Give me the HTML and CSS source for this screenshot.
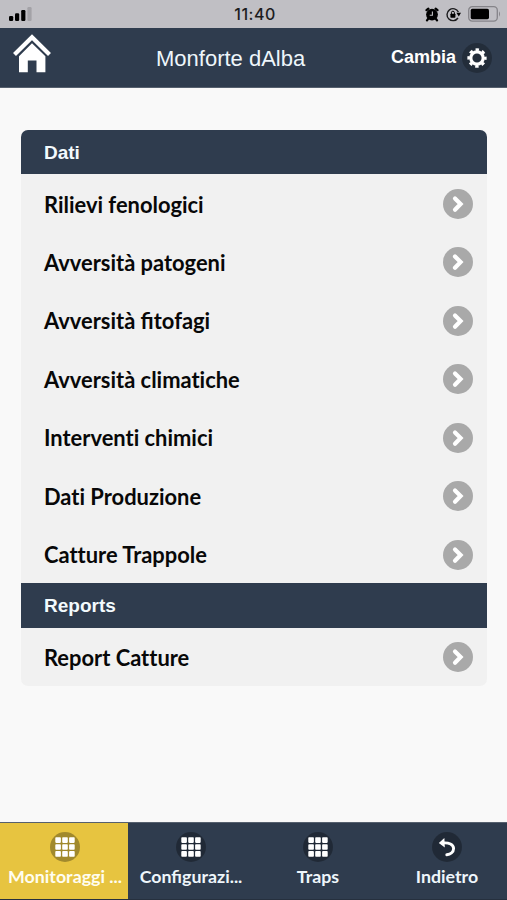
FILE: index.html
```html
<!DOCTYPE html>
<html lang="it">

<head>
 <meta charset="UTF-8">
 <meta name="viewport" content="width=device-width, initial-scale=1.0">
 <title>Monforte dAlba</title>
 <link rel="stylesheet" href="styles.css">
</head>

<body>

 <!-- Shared icons -->
 <svg class="sprite" aria-hidden="true">
  <symbol id="chevron" viewBox="0 0 30 30">
   <circle cx="15" cy="15" r="15" fill="#a9a9a9" />
   <path d="M12 9.4 L17.6 15 L12 20.8" fill="none" stroke="#fff" stroke-width="4.2" stroke-linecap="round" />
  </symbol>
  <symbol id="grid" viewBox="0 0 30 30">
   <circle cx="15" cy="15" r="15" fill="#000" fill-opacity=".3" />
   <g fill="#fff">
    <rect x="5.3" y="5.3" width="5.6" height="5.6" rx=".8" />
    <rect x="12.2" y="5.3" width="5.6" height="5.6" rx=".8" />
    <rect x="19.1" y="5.3" width="5.6" height="5.6" rx=".8" />
    <rect x="5.3" y="12.2" width="5.6" height="5.6" rx=".8" />
    <rect x="12.2" y="12.2" width="5.6" height="5.6" rx=".8" />
    <rect x="19.1" y="12.2" width="5.6" height="5.6" rx=".8" />
    <rect x="5.3" y="19.1" width="5.6" height="5.6" rx=".8" />
    <rect x="12.2" y="19.1" width="5.6" height="5.6" rx=".8" />
    <rect x="19.1" y="19.1" width="5.6" height="5.6" rx=".8" />
   </g>
  </symbol>
 </svg>

 <div class="status">
  <svg class="signal" width="24" height="15" viewBox="0 0 24 15">
   <rect x="0" y="9" width="4.2" height="5" rx="1.2" />
   <rect x="6" y="6.3" width="4.2" height="7.7" rx="1.2" />
   <rect x="12.2" y="3" width="4.2" height="11" rx="1.2" />
   <rect x="18.4" y="0" width="4.2" height="14" rx="1.2" fill="#a3a2a7" />
  </svg>
  <span class="time">11:40</span>
  <div class="status-icons">
   <svg width="14" height="15" viewBox="0 0 14 15">
    <circle cx="7" cy="7.6" r="5.9" />
    <path d="M1.5 3.2 L3.4 1.6 M12.5 3.2 L10.6 1.6 M3 12 L2 13.4 M11 12 L12 13.4" stroke="#000" stroke-width="2.2" stroke-linecap="round" />
    <path d="M7.4 4.6 V8.2 H4.7" fill="none" stroke="#c0bfc4" stroke-width="1.1" />
   </svg>
   <svg width="15" height="15" viewBox="0 0 15 15">
    <path d="M12.4 5 A6 6 0 1 0 12 11" fill="none" stroke="#1c1c1e" stroke-width="1.4" />
    <path d="M10.4 5.8 H15 L12.8 9.4 Z" />
    <rect x="4.4" y="6.7" width="5" height="4" rx=".6" />
    <path d="M5.4 7 V5.7 A1.5 1.5 0 0 1 8.4 5.7 V7" fill="none" stroke="#000" stroke-width="1" />
   </svg>
   <svg width="33" height="16" viewBox="0 0 33 16">
    <rect x=".7" y=".7" width="28.6" height="14.4" rx="3.6" fill="none" stroke="#858489" stroke-width="1.3" />
    <rect x="2.7" y="2.8" width="18.3" height="10.4" rx="1.6" />
    <path d="M31 5.3 Q33 8 31 10.7 Z" fill="#858489" />
   </svg>
  </div>
 </div>

 <header class="header">
  <a class="home" href="#" aria-label="Home">
   <svg width="40" height="40" viewBox="0 0 40 40" fill="#fff">
    <path d="M2.5 20.5 L20 3.2 L37.5 20.5" fill="none" stroke="#fff" stroke-width="4.2" />
    <path d="M20 9.3 L33.4 22.2 V38.3 H24.5 V26.5 H15.8 V38.3 H7 V22.2 Z" />
   </svg>
  </a>
  <h1 class="title">Monforte dAlba</h1>
  <a class="change" href="#">
   <span>Cambia</span>
   <svg width="30" height="30" viewBox="0 0 30 30">
    <circle cx="15" cy="15" r="15" fill="#000" fill-opacity=".25" />
    <circle cx="15" cy="15" r="6.2" fill="none" stroke="#fff" stroke-width="3.2" />
    <circle cx="15" cy="15" r="8.3" fill="none" stroke="#fff" stroke-width="2.7" stroke-dasharray="3.4 3.119" stroke-dashoffset="1.7" />
   </svg>
  </a>
 </header>

 <main class="content">
  <ul class="list">
   <li class="divider">Dati</li>
   <li class="row"><a href="#">Rilievi fenologici</a><svg class="icon"><use href="#chevron" /></svg></li>
   <li class="row"><a href="#">Avversità patogeni</a><svg class="icon"><use href="#chevron" /></svg></li>
   <li class="row"><a class="joined" href="#">Avversità fitofagi</a><svg class="icon"><use href="#chevron" /></svg></li>
   <li class="row"><a href="#">Avversità climatiche</a><svg class="icon"><use href="#chevron" /></svg></li>
   <li class="row"><a href="#">Interventi chimici</a><svg class="icon"><use href="#chevron" /></svg></li>
   <li class="row"><a href="#">Dati Produzione</a><svg class="icon"><use href="#chevron" /></svg></li>
   <li class="row"><a href="#">Catture Trappole</a><svg class="icon"><use href="#chevron" /></svg></li>
   <li class="divider">Reports</li>
   <li class="row"><a href="#">Report Catture</a><svg class="icon"><use href="#chevron" /></svg></li>
  </ul>
 </main>

 <nav class="navbar">
  <a class="tab active" href="#">
   <svg class="icon"><use href="#grid" /></svg>
   <span>Monitoraggi ...</span>
  </a>
  <a class="tab" href="#">
   <svg class="icon"><use href="#grid" /></svg>
   <span>Configurazi...</span>
  </a>
  <a class="tab" href="#">
   <svg class="icon"><use href="#grid" /></svg>
   <span>Traps</span>
  </a>
  <a class="tab back" href="#">
   <svg class="icon" viewBox="0 0 30 30">
    <circle cx="15" cy="15" r="15" fill="#000" fill-opacity=".3" />
    <path d="M10.5 11 C17 10.4 21.6 12.4 21.6 16.6 C21.6 20.4 18.2 22.4 14.8 22.8" fill="none" stroke="#fff" stroke-width="2.9" stroke-linecap="round" />
    <path d="M6.8 11 L12.4 6 L12.8 15.4 Z" fill="#fff" />
   </svg>
   <span>Indietro</span>
  </a>
 </nav>

</body>

</html>
```

FILE: styles.css
```css
:root {
 --title-font: "Liberation Sans", sans-serif;
 --main-font: Lato, sans-serif;
 --main-color: #2f3c4e;
 --active-color: #e7c440;
 --row-color: #f1f1f1;
}

*,
*::before,
*::after {
 box-sizing: border-box;
}

body {
 display: flex;
 flex-direction: column;
 height: 100vh;
 margin: 0;
 overflow: hidden;
 background-color: #f9f9f9;
 font-family: var(--main-font);
}

a {
 color: inherit;
 text-decoration: none;
}

.sprite {
 display: none;
}

.icon {
 display: block;
 flex: none;
 width: 30px;
 height: 30px;
}

/* - - - Status bar - - - */
.status {
 display: grid;
 grid-template-columns: 1fr auto 1fr;
 align-items: center;
 height: 28px;
 padding: 0 6px 0 9px;
 background-color: #c0bfc4;
}

.time {
 font-family: Inter, sans-serif;
 font-size: 16px;
 font-weight: 500;
 letter-spacing: .5px;
 color: #1c1c1e;
}

.status-icons {
 display: flex;
 align-items: center;
 justify-content: flex-end;
 gap: 7px;
}

/* - - - Header - - - */
.header {
 display: flex;
 align-items: center;
 height: 60px;
 padding: 0 15px 0 12px;
 border-bottom: 1px solid #56606e;
 background-color: var(--main-color);
 color: #fff;
}

.home {
 width: 144px;
 height: 48px;
}

.title {
 margin: 2px 0 0;
 font-family: var(--title-font);
 font-size: 22px;
 font-weight: 400;
 color: #eef6fb;
}

.change {
 display: flex;
 align-items: center;
 gap: 6px;
 margin-left: auto;
 font-family: var(--title-font);
 font-size: 18px;
 font-weight: 700;
}

/* - - - List - - - */
.content {
 flex: 1;
 padding: 42px 20px 0 21px;
}

.list {
 margin: 0;
 padding: 0;
 overflow: hidden;
 border-radius: 7px;
 list-style: none;
 background-color: var(--row-color);
}

.divider {
 height: 44.3px;
 padding-left: 23px;
 background-color: var(--main-color);
 color: #f3fafd;
 font-family: var(--title-font);
 font-size: 19px;
 font-weight: 700;
 line-height: 46px;
}

.row {
 display: flex;
 align-items: center;
 justify-content: space-between;
 height: 58.45px;
 padding: 1px 14px 0 23px;
 font-size: 21.9px;
 font-weight: 700;
 font-variant-ligatures: none;
 color: #080808;
}

.joined {
 font-variant-ligatures: normal;
}

/* - - - Bottom navbar - - - */
.navbar {
 display: grid;
 grid-template-columns: 128px 126px 128px 125px;
 height: 78px;
 border-top: 1px solid #56606e;
 border-bottom: 1px solid #26303e;
 background-color: var(--main-color);
}

.tab {
 display: flex;
 flex-direction: column;
 align-items: center;
 padding-top: 9px;
 font-size: 17.8px;
 font-weight: 700;
 line-height: 28px;
 white-space: nowrap;
 color: #eef6fb;
}

.active {
 padding-left: 2px;
 background-color: var(--active-color);
 color: #fffdf0;
}

.back {
 padding-left: 5px;
}
```
